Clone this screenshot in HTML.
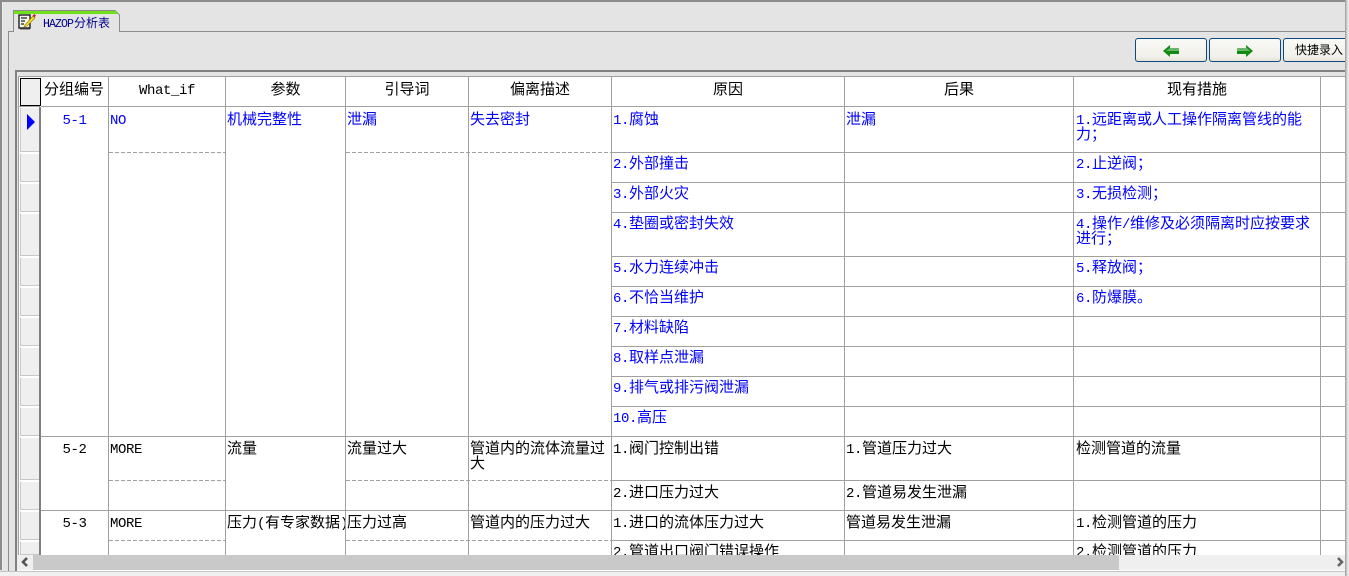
<!DOCTYPE html>
<html><head><meta charset="utf-8"><style>
html,body{margin:0;padding:0;width:1349px;height:576px;overflow:hidden;background:#e4e4e4}
*{box-sizing:border-box}
.a{position:absolute}
#t{position:absolute;left:0;top:0;width:1349px;height:576px;overflow:hidden;font-family:"Liberation Mono","WenQuanYi Zen Hei",monospace;font-size:13.33px}
.x{position:absolute;white-space:nowrap;font-size:15px;line-height:15px;color:#000;font-family:"WenQuanYi Zen Hei",sans-serif}
.x b{font-family:"Liberation Mono",monospace;font-weight:normal;font-size:14px;letter-spacing:-.4px}
.b{color:#00f}
.h{text-align:center}
.v{position:absolute;width:1px;background:#a0a0a0}
.l{position:absolute;height:1px;background:#a0a0a0}
.d{position:absolute;height:1px;background:repeating-linear-gradient(90deg,#a0a0a0 0 4px,#fff 4px 6px)}
.r{position:absolute;left:20px;width:20px;background:#efefef;border:1px solid #c8c8c8;border-top-color:#fff}
.btn{position:absolute;top:38px;height:24px;border:1px solid #0b4a80;border-radius:3px;background:linear-gradient(#f9f9f6,#f1f0ea 80%,#e6e3d6)}
</style></head><body>
<div id="t">
<div class="a" style="left:0;top:0;width:1349px;height:2px;background:#8c8c8c"></div>
<div class="a" style="left:0;top:0;width:2px;height:570px;background:#8c8c8c"></div>
<div class="a" style="left:2px;top:2px;width:1px;height:568px;background:#eee"></div>
<div class="a" style="left:8px;top:31px;width:1px;height:540px;background:#8c8c8c"></div>
<div class="a" style="left:8px;top:31px;width:6px;height:1px;background:#8c8c8c"></div>
<div class="a" style="left:119px;top:31px;width:1226px;height:1px;background:#8c8c8c"></div>

<!-- tab -->
<svg class="a" style="left:13px;top:10px" width="108" height="23">
<path d="M.5 22V.5H102L106.500 5V22" fill="#e4e4e4" stroke="#8c8c8c"/>
<path d="M1 1H102.500L105.500 4H1z" fill="#6fe01a"/>
</svg>
<svg class="a" style="left:17px;top:12px" width="20" height="18" viewBox="0 0 20 18">
<rect x="2" y="3" width="11" height="13" fill="#f4f4ec" stroke="#111" stroke-width="1.300"/>
<path d="M4 6h6M4 9h4M4 12h3" stroke="#222" stroke-width="1.200"/>
<path d="M3 17h10" stroke="#555"/>
<path d="M8 13l8-9 2 2-8 8-3 1z" fill="#f5dc1e" stroke="#8a7a10" stroke-width=".6"/>
<path d="M15.500 3.500l2-1.500 1.500 1.500-1.500 2z" fill="#e02020"/>
</svg>
<div class="x" style="left:43px;top:16px;color:#00008b;font-size:12px;line-height:14px"><span style="font-family:'Liberation Mono',monospace;font-size:11.500px;letter-spacing:-.9px">HAZOP</span><span style="margin-left:1px">分析表</span></div>

<!-- buttons -->
<div class="btn" style="left:1135px;width:72px"></div>
<div class="btn" style="left:1209px;width:72px"></div>
<div class="btn" style="left:1283px;width:66px"></div>
<svg class="a" style="left:1163px;top:44px" width="16" height="14"><path d="M0 7l7-6v3h9v6H7v3z" fill="#118a11"/><path d="M7 4h9v3H3z" fill="#6cb56c"/></svg>
<svg class="a" style="left:1237px;top:44px" width="16" height="14"><path d="M16 7l-7-6v3H0v6h9v3z" fill="#118a11"/><path d="M0 4h9v-1l4 4H0z" fill="#6cb56c"/></svg>
<div class="x" style="left:1295px;top:43px;font-size:12px;line-height:14px;">快捷录入</div>

<!-- grid frame -->
<div class="a" style="left:15px;top:70px;width:1330px;height:2px;background:#808080"></div>
<div class="a" style="left:15px;top:70px;width:2px;height:501px;background:#808080"></div>
<div class="a" style="left:18px;top:76px;width:1327px;height:479px;background:#fff"></div>
<div class="a" style="left:18px;top:76px;width:1327px;height:1px;background:#a0a0a0"></div>
<div class="a" style="left:18px;top:76px;width:1px;height:479px;background:#a0a0a0"></div>

<!-- indicator column -->
<div class="a" style="left:20px;top:78px;width:21px;height:28px;background:#efefef;border:1px solid #000"></div>
<div class="r" style="top:107px;height:45px"></div>
<div class="r" style="top:153px;height:29px"></div>
<div class="r" style="top:183px;height:29px"></div>
<div class="r" style="top:213px;height:43px"></div>
<div class="r" style="top:257px;height:29px"></div>
<div class="r" style="top:287px;height:29px"></div>
<div class="r" style="top:317px;height:29px"></div>
<div class="r" style="top:347px;height:29px"></div>
<div class="r" style="top:377px;height:29px"></div>
<div class="r" style="top:407px;height:29px"></div>
<div class="r" style="top:437px;height:43px"></div>
<div class="r" style="top:481px;height:29px"></div>
<div class="r" style="top:511px;height:29px"></div>
<div class="r" style="top:541px;height:14px"></div>
<div class="a" style="left:39px;top:107px;width:2px;height:448px;background:#808080"></div>
<svg class="a" style="left:27px;top:114px" width="9" height="16"><path d="M0 0l8 8-8 8z" fill="#00f"/></svg>

<!-- lines -->
<div class="l" style="left:41px;top:106px;width:1304px"></div>
<div class="l" style="left:18px;top:106px;width:22px"></div>
<div class="d" style="left:109px;top:152px;width:116px"></div>
<div class="d" style="left:346px;top:152px;width:265px"></div>
<div class="l" style="left:612px;top:152px;width:733px"></div>
<div class="l" style="left:612px;top:182px;width:733px"></div>
<div class="l" style="left:612px;top:212px;width:733px"></div>
<div class="l" style="left:612px;top:256px;width:733px"></div>
<div class="l" style="left:612px;top:286px;width:733px"></div>
<div class="l" style="left:612px;top:316px;width:733px"></div>
<div class="l" style="left:612px;top:346px;width:733px"></div>
<div class="l" style="left:612px;top:376px;width:733px"></div>
<div class="l" style="left:612px;top:406px;width:733px"></div>
<div class="l" style="left:41px;top:436px;width:1304px"></div>
<div class="d" style="left:109px;top:480px;width:116px"></div>
<div class="d" style="left:346px;top:480px;width:265px"></div>
<div class="l" style="left:612px;top:480px;width:733px"></div>
<div class="l" style="left:41px;top:510px;width:1304px"></div>
<div class="d" style="left:109px;top:540px;width:116px"></div>
<div class="d" style="left:346px;top:540px;width:265px"></div>
<div class="l" style="left:612px;top:540px;width:733px"></div>
<div class="v" style="left:108px;top:77px;height:478px"></div>
<div class="v" style="left:225px;top:77px;height:478px"></div>
<div class="v" style="left:345px;top:77px;height:478px"></div>
<div class="v" style="left:468px;top:77px;height:478px"></div>
<div class="v" style="left:611px;top:77px;height:478px"></div>
<div class="v" style="left:844px;top:77px;height:478px"></div>
<div class="v" style="left:1073px;top:77px;height:478px"></div>
<div class="v" style="left:1320px;top:77px;height:478px"></div>

<!-- header -->
<div class="x" style="left:44px;top:82px">分组编号</div>
<div class="x h" style="left:109px;width:116px;top:82px"><b>What_if</b></div>
<div class="x h" style="left:226px;width:119px;top:82px">参数</div>
<div class="x h" style="left:346px;width:122px;top:82px">引导词</div>
<div class="x h" style="left:469px;width:142px;top:82px">偏离描述</div>
<div class="x h" style="left:612px;width:232px;top:82px">原因</div>
<div class="x h" style="left:845px;width:228px;top:82px">后果</div>
<div class="x h" style="left:1074px;width:246px;top:82px">现有措施</div>

<!-- rows -->
<div class="x b h" style="left:41px;width:67px;top:112px"><b>5-1</b></div>
<div class="x b" style="left:110px;top:112px"><b>NO</b></div>
<div class="x b" style="left:227px;top:112px">机械完整性</div>
<div class="x b" style="left:347px;top:112px">泄漏</div>
<div class="x b" style="left:470px;top:112px">失去密封</div>
<div class="x b" style="left:613px;top:112px"><b>1.</b>腐蚀</div>
<div class="x b" style="left:846px;top:112px">泄漏</div>
<div class="x b" style="left:1076px;top:112px"><b>1.</b>远距离或人工操作隔离管线的能</div>
<div class="x b" style="left:1076px;top:127px">力；</div>
<div class="x b" style="left:613px;top:156px"><b>2.</b>外部撞击</div>
<div class="x b" style="left:1076px;top:156px"><b>2.</b>止逆阀；</div>
<div class="x b" style="left:613px;top:186px"><b>3.</b>外部火灾</div>
<div class="x b" style="left:1076px;top:186px"><b>3.</b>无损检测；</div>
<div class="x b" style="left:613px;top:216px"><b>4.</b>垫圈或密封失效</div>
<div class="x b" style="left:1076px;top:216px"><b>4.</b>操作<b>/</b>维修及必须隔离时应按要求</div>
<div class="x b" style="left:1076px;top:231px">进行；</div>
<div class="x b" style="left:613px;top:260px"><b>5.</b>水力连续冲击</div>
<div class="x b" style="left:1076px;top:260px"><b>5.</b>释放阀；</div>
<div class="x b" style="left:613px;top:290px"><b>6.</b>不恰当维护</div>
<div class="x b" style="left:1076px;top:290px"><b>6.</b>防爆膜。</div>
<div class="x b" style="left:613px;top:320px"><b>7.</b>材料缺陷</div>
<div class="x b" style="left:613px;top:350px"><b>8.</b>取样点泄漏</div>
<div class="x b" style="left:613px;top:380px"><b>9.</b>排气或排污阀泄漏</div>
<div class="x b" style="left:613px;top:410px"><b>10.</b>高压</div>

<div class="x h" style="left:41px;width:67px;top:441px"><b>5-2</b></div>
<div class="x" style="left:110px;top:441px"><b>MORE</b></div>
<div class="x" style="left:227px;top:441px">流量</div>
<div class="x" style="left:347px;top:441px">流量过大</div>
<div class="x" style="left:470px;top:441px">管道内的流体流量过</div>
<div class="x" style="left:470px;top:456px">大</div>
<div class="x" style="left:613px;top:441px"><b>1.</b>阀门控制出错</div>
<div class="x" style="left:846px;top:441px"><b>1.</b>管道压力过大</div>
<div class="x" style="left:1076px;top:441px">检测管道的流量</div>
<div class="x" style="left:613px;top:485px"><b>2.</b>进口压力过大</div>
<div class="x" style="left:846px;top:485px"><b>2.</b>管道易发生泄漏</div>

<div class="x h" style="left:41px;width:67px;top:515px"><b>5-3</b></div>
<div class="x" style="left:110px;top:515px"><b>MORE</b></div>
<div class="x" style="left:227px;top:515px;width:118px;overflow:hidden">压力<b>(</b>有专家数据<b>)</b></div>
<div class="x" style="left:347px;top:515px">压力过高</div>
<div class="x" style="left:470px;top:515px">管道内的压力过大</div>
<div class="x" style="left:613px;top:515px"><b>1.</b>进口的流体压力过大</div>
<div class="x" style="left:846px;top:515px">管道易发生泄漏</div>
<div class="x" style="left:1076px;top:515px"><b>1.</b>检测管道的压力</div>
<div class="x" style="left:613px;top:544px"><b>2.</b>管道出口阀门错误操作</div>
<div class="x" style="left:1076px;top:544px"><b>2.</b>检测管道的压力</div>

<!-- scrollbar -->
<div class="a" style="left:17px;top:555px;width:1328px;height:15px;background:#efefef"></div>
<div class="a" style="left:33px;top:555px;width:1086px;height:15px;background:#c9c9c9"></div>
<svg class="a" style="left:20px;top:557px" width="10" height="10"><path d="M7 1L3 5l4 4" fill="none" stroke="#555" stroke-width="2.600"/></svg>
<svg class="a" style="left:1335px;top:557px" width="10" height="10"><path d="M3 1l4 4-4 4" fill="none" stroke="#666" stroke-width="2.600"/></svg>
<div class="a" style="left:17px;top:570px;width:1328px;height:1px;background:#fff"></div>

<div class="a" style="left:0;top:571px;width:1349px;height:5px;background:#f0f0f0"></div>
<div class="a" style="left:0;top:571px;width:1345px;height:1px;background:#c4c4c4"></div>
<div class="a" style="left:1345px;top:0;width:4px;height:576px;background:linear-gradient(90deg,#999,#ddd 60%,#f0f0f0)"></div>
</div>
</body></html>
